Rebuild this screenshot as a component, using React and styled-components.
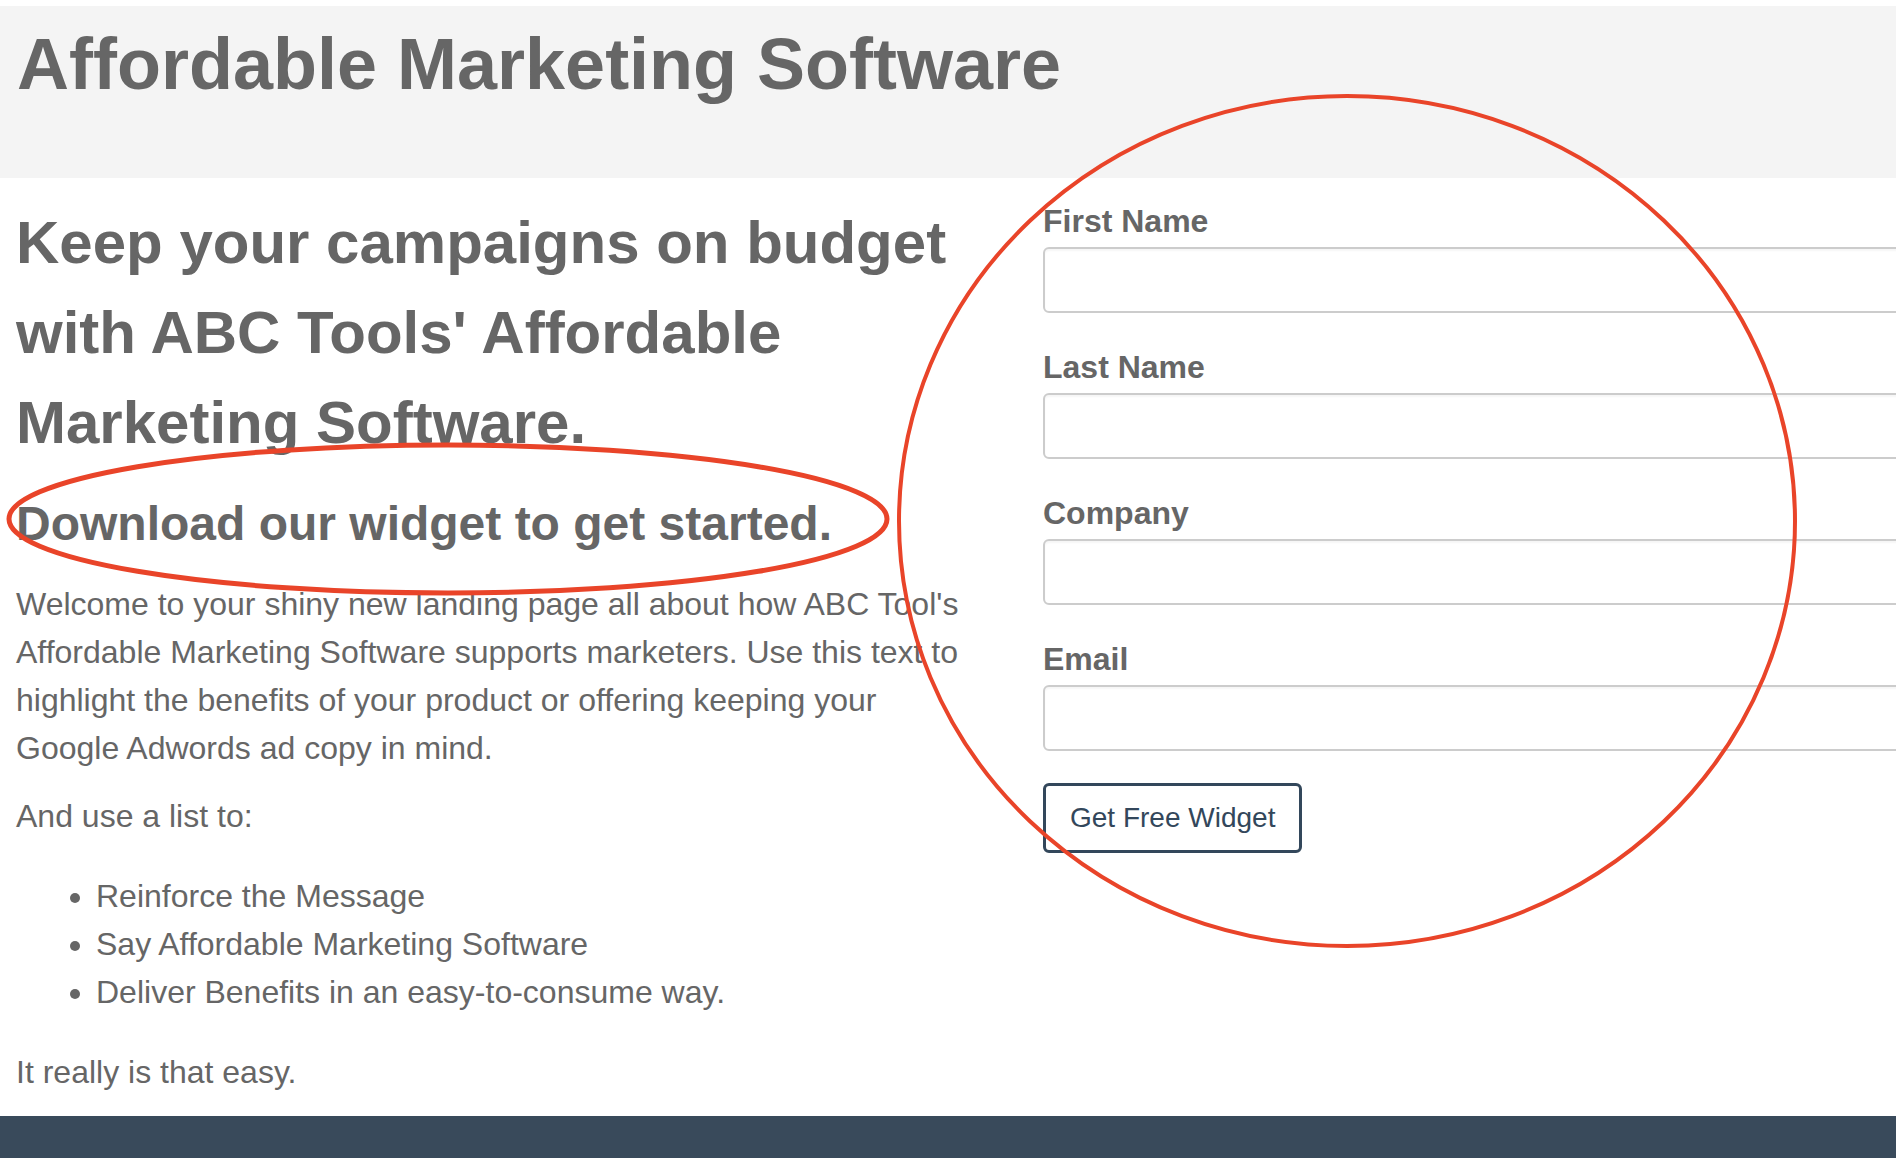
import React from "react";
import styled, { createGlobalStyle } from "styled-components";

const GlobalStyle = createGlobalStyle`
  html, body {
    margin: 0;
    padding: 0;
    background: #ffffff;
    overflow: hidden;
  }
  body {
    font-family: "Liberation Sans", Arial, Helvetica, sans-serif;
    color: #666666;
  }
  * { box-sizing: border-box; }
`;

const Page = styled.div`
  position: relative;
  width: 100%;
  height: 1158px;
  padding-top: 6px;
  overflow: hidden;
`;

const Header = styled.header`
  background: #f4f4f4;
  height: 172px;
  padding: 18px 16px 0 17px;
`;

const Title = styled.h1`
  margin: 0;
  font-size: 72px;
  line-height: 80px;
  font-weight: 700;
  color: #666666;
  white-space: nowrap;
`;

const Main = styled.main`
  display: grid;
  grid-template-columns: 960px 1000px;
  column-gap: 67px;
  align-items: start;
  padding: 20px 0 0 16px;
  width: max-content;
`;

const Column = styled.section`
  display: flex;
  flex-direction: column;
`;

const Headline = styled.h2`
  margin: 0 0 20px;
  font-size: 60px;
  line-height: 90px;
  font-weight: 700;
  color: #666666;
`;

const SubHeadline = styled.h3`
  margin: 0 0 20px;
  font-size: 48px;
  line-height: 72px;
  font-weight: 700;
  color: #666666;
`;

const Text = styled.p`
  margin: 0 0 20px;
  font-size: 32px;
  line-height: 48px;
  color: #666666;
`;

const List = styled.ul`
  margin: 12px 0 32px;
  padding-left: 80px;
`;

const Item = styled.li`
  font-size: 32px;
  line-height: 48px;
  color: #666666;
`;

const Form = styled.form`
  display: flex;
  flex-direction: column;
  align-items: flex-start;
  margin-top: -1px;
`;

const Field = styled.div`
  display: flex;
  flex-direction: column;
  width: 100%;
  margin-bottom: 30px;
`;

const Label = styled.label`
  display: block;
  font-size: 32px;
  line-height: 48px;
  font-weight: 700;
  color: #666666;
  margin-bottom: 2px;
`;

const Input = styled.input`
  display: block;
  width: 100%;
  height: 66px;
  border: 2px solid #cccccc;
  border-radius: 6px;
  background: #ffffff;
  box-shadow: inset 0 2px 2px rgba(0, 0, 0, 0.04);
  font-family: inherit;
  font-size: 28px;
  padding: 0 16px;
  outline: none;
`;

const Button = styled.button`
  margin-top: 2px;
  height: 70px;
  padding: 0 24px;
  border: 3px solid #33475b;
  border-radius: 6px;
  background: #ffffff;
  color: #33475b;
  font-family: "Liberation Sans", Arial, Helvetica, sans-serif;
  font-size: 28px;
  line-height: 1;
  cursor: pointer;
`;

const Footer = styled.footer`
  background: #394a5b;
  height: 42px;
`;

const Annotations = styled.svg`
  position: absolute;
  left: 0;
  top: 0;
  width: 1896px;
  height: 1158px;
  pointer-events: none;
`;

const fields = ["First Name", "Last Name", "Company", "Email"];

export default function App() {
  return (
    <>
      <GlobalStyle />
      <Page>
        <Header>
          <Title>Affordable Marketing Software</Title>
        </Header>
        <Main>
          <Column>
            <Headline>
              Keep your campaigns on budget with ABC Tools' Affordable Marketing
              Software.
            </Headline>
            <SubHeadline>Download our widget to get started.</SubHeadline>
            <Text>
              Welcome to your shiny new landing page all about how ABC Tool's
              Affordable Marketing Software supports marketers. Use this text to
              highlight the benefits of your product or offering keeping your
              Google Adwords ad copy in mind.
            </Text>
            <Text>And use a list to:</Text>
            <List>
              <Item>Reinforce the Message</Item>
              <Item>Say Affordable Marketing Software</Item>
              <Item>Deliver Benefits in an easy-to-consume way.</Item>
            </List>
            <Text>It really is that easy.</Text>
          </Column>
          <Column>
            <Form onSubmit={(e) => e.preventDefault()}>
              {fields.map((f) => (
                <Field key={f}>
                  <Label>{f}</Label>
                  <Input type="text" />
                </Field>
              ))}
              <Button type="submit">Get Free Widget</Button>
            </Form>
          </Column>
        </Main>
        <Footer />
        <Annotations viewBox="0 0 1896 1158">
          <ellipse
            cx="1347"
            cy="521"
            rx="448"
            ry="425"
            fill="none"
            stroke="#e94429"
            strokeWidth="4"
          />
          <ellipse
            cx="448"
            cy="519"
            rx="439"
            ry="74"
            fill="none"
            stroke="#e94429"
            strokeWidth="5"
          />
        </Annotations>
      </Page>
    </>
  );
}
